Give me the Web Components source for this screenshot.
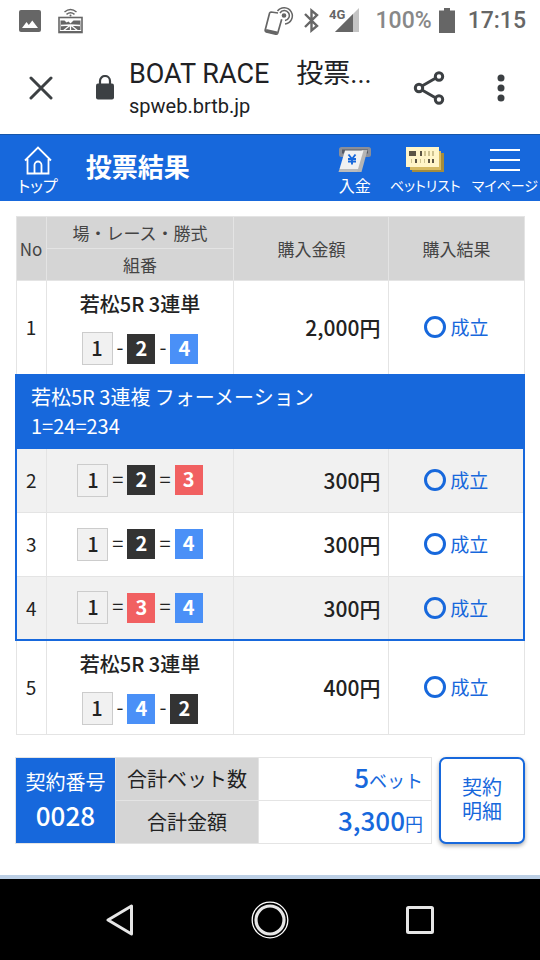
<!DOCTYPE html>
<html lang="ja">
<head>
<meta charset="utf-8">
<meta name="viewport" content="width=device-width, initial-scale=1">
<title>BOAT RACE 投票結果</title>
<style>
  :root { --blue: #1768dc; --grey: #d5d5d5; --line: #e4e4e4; --ink: #222; --stripe: #f1f1f1; }
  body { margin: 0; background: #fff; color: var(--ink); font-family: "Noto Sans CJK JP", sans-serif; }
</style>
</head>
<body>
<vote-app></vote-app>
<script>
const define = (name, html, setup) => {
  const template = document.createElement('template');
  template.innerHTML = html;
  customElements.define(name, class extends HTMLElement {
    constructor() {
      super();
      this.attachShadow({ mode: 'open' }).append(template.content.cloneNode(true));
    }
    connectedCallback() { if (setup) setup(this, this.shadowRoot); }
  });
};

define('status-bar', `
<style>
  :host { display: flex; align-items: center; height: 41px; padding: 0 14px 0 19px; box-sizing: border-box;
    font: 500 23px/26px Roboto, sans-serif; color: #666; }
  svg { display: block; flex: none; }
  .left, .right { display: flex; align-items: center; }
  .left { gap: 17px; }
  .right { margin-left: auto; }
  .cast { margin-right: 9px; }
  .bt { margin-right: 9px; }
  .signal { margin-right: 15px; }
  .percent { color: #888; margin-right: 7px; }
  .battery { margin-right: 13px; }
</style>
<div class="left">
  <svg width="22" height="22" viewBox="0 0 22 22"><rect width="22" height="22" rx="2" fill="#666"/><path d="M3 18l4.500-6 2.300 3 3.500-4.500L19 18z" fill="#fff"/></svg>
  <svg width="25" height="26" viewBox="0 0 25 26" fill="none" stroke="#666">
    <path d="M6.500 4q6-5 12 0M8.500 6.300q4-3 8 0" stroke-width="1.500"/><circle cx="12.500" cy="7.500" r="1" fill="#666" stroke="none"/>
    <rect x="1" y="9.500" width="23" height="15" stroke-width="1.600"/>
    <path d="M2.500 12.500h4l2 2 2-1 2 2 3-3h7V22H2.500z" fill="#666" stroke="none"/>
    <path d="M12.500 17L3 17.500M12.500 17l9.500.5M12.500 17L5 23M12.500 17l7.500 6M12.500 18v5" stroke="#fff" stroke-width="1.300"/>
    <path d="M1 24h23" stroke-width="2"/>
  </svg>
</div>
<div class="right">
  <svg class="cast" width="30" height="30" viewBox="0 0 30 30" fill="none" stroke="#666" stroke-width="1.700">
    <path d="M14 7L7 6Q6 6 5.600 7L1.200 24q-.3 1.500 1 2l9.500 2.200q1.500.3 2-1l4-14"/><path d="M2 24.500l11 2.500" stroke-width="3"/>
    <circle cx="20" cy="9.500" r="1.500" fill="#666"/><path d="M16 7a5 5 0 1 1 5 7.500M13.500 5a8.200 8.200 0 1 1 7.500 13" stroke-width="1.500"/>
  </svg>
  <svg class="bt" width="17" height="25" viewBox="0 0 17 25" fill="none" stroke="#666" stroke-width="2.400"><path d="M2 6l12 12-5.500 4.500v-20L14 7 2 19"/></svg>
  <svg class="signal" width="31" height="25" viewBox="0 0 31 25"><path d="M30 0v24H6z" fill="#c4c4c4"/><path d="M24 6v18H6z" fill="#666"/><text x="0" y="11" font-family="Roboto" font-weight="700" font-size="13" fill="#666" stroke="#fff" stroke-width="2" paint-order="stroke">4G</text></svg>
  <span class="percent">100%</span>
  <svg class="battery" width="16" height="25" viewBox="0 0 16 25"><path d="M5 0h6v2.500h5V25H0V2.500h5z" fill="#666"/></svg>
  <span>17:15</span>
</div>`);

define('browser-bar', `
<style>
  :host { display: flex; align-items: center; height: 94px; padding: 0 20px 0 22px; box-sizing: border-box; color: #202124;
    font-family: Roboto, "Noto Sans CJK JP", sans-serif; border-bottom: 1px solid #1656aa; }
  button { border: 0; padding: 0; background: none; display: grid; place-items: center; height: 48px; width: 38px; flex: none; }
  svg { display: block; }
  .lock { margin: 0 14px 0 35px; flex: none; }
  .page { flex: 1; min-width: 0; }
  p { margin: 0; white-space: nowrap; }
  .title { font-size: 27px; line-height: 37px; }
  .host { font-size: 20px; line-height: 26px; }
  .share { margin-right: 34px; }
</style>
<button aria-label="閉じる"><svg width="24" height="24" viewBox="0 0 24 24"><path d="M2 2l20 20M22 2L2 22" stroke="#3c4043" stroke-width="3" stroke-linecap="round"/></svg></button>
<svg class="lock" width="20" height="25" viewBox="0 0 20 25"><path d="M5 9V6a5 5 0 0 1 10 0v3" fill="none" stroke="#3c4043" stroke-width="2.200"/><rect x="1" y="8.500" width="18" height="16" rx="2" fill="#3c4043"/></svg>
<div class="page"><p class="title">BOAT RACE　投票...</p><p class="host">spweb.brtb.jp</p></div>
<button class="share" aria-label="共有"><svg width="32" height="34" viewBox="0 0 32 34" fill="none" stroke="#3c4043" stroke-width="3"><path d="M9 15L22 7.500M9 19l13 7.500"/><circle cx="6" cy="17" r="3.700"/><circle cx="26" cy="5.500" r="3.700"/><circle cx="26" cy="28.500" r="3.700"/></svg></button>
<button aria-label="メニュー"><svg width="8" height="28" viewBox="0 0 8 28" fill="#3c4043"><circle cx="4" cy="4" r="3.500"/><circle cx="4" cy="14" r="3.500"/><circle cx="4" cy="24" r="3.500"/></svg></button>`);

define('nav-link', `
<style>
  :host { display: block; font-size: 16px; }
  :host([compact]) { font-size: 14px; }
  a { display: flex; flex-direction: column; align-items: center; padding-top: 2px; color: #fff; text-decoration: none; white-space: nowrap;
    line-height: 18px; font-feature-settings: "palt"; }
  .icon { height: 32px; display: flex; align-items: center; }
</style>
<a href="#"><span class="icon"><slot name="icon"></slot></span><span><slot></slot></span></a>`);

define('app-header', `
<style>
  :host { display: flex; align-items: center; height: 66px; background: var(--blue); color: #fff; padding: 0 2px 0 18px; box-sizing: border-box; }
  h1 { margin: 0 0 0 28px; padding-bottom: 4px; font-size: 26px; line-height: 38px; font-weight: 700; }
  nav { margin-left: auto; display: flex; gap: 11px; }
  svg { display: block; }
  .deposit { margin-right: 7px; }
</style>
<nav-link><svg slot="icon" width="28" height="29" viewBox="0 0 28 29" fill="none" stroke="#fff" stroke-width="1.800"><path d="M1 14.500L14 1.500l13 13M3.500 13v14.500h21V13M10.500 27v-8a3.500 3.500 0 0 1 7 0v8"/></svg>トップ</nav-link>
<h1>投票結果</h1>
<nav>
  <nav-link class="deposit"><svg slot="icon" width="34" height="28" viewBox="0 0 34 28">
    <rect x="1" y="1" width="32" height="10" rx="2.500" fill="#8c8f98"/><path d="M4 3.500h26v4H4z" fill="#555a65"/><path d="M24 4h5.500l-6 22H12z" fill="#b5b5b5"/><path d="M7 4.500h18.500L20 23H1.500z" fill="#f1f1f1"/><path d="M1.500 23H20l-1 3H0.500z" fill="#bbb"/>
    <path d="M10.500 8.500l3.500 4.500 3.500-4.500M10 13h8M10 15.500h8M14 12.500v6" stroke="#1768dc" stroke-width="1.900" fill="none"/></svg>入金</nav-link>
  <nav-link compact><svg slot="icon" width="38" height="26" viewBox="0 0 38 26">
    <path d="M6 6h32v19H6z" fill="#a58c3c"/><path d="M4 4h31v19H4z" fill="#d6ba62"/><path d="M0 0h33v20H0z" fill="#fff5c9"/>
    <path d="M3 4h7v5H3zM14 4h2v5h-2zM9 12h2v4H9zM22 12h2v4h-2zM26 12h2v4h-2z" fill="#5c5545"/><path d="M18 4h2v5h-2zM22 4h2v5h-2zM26 4h2v5h-2zM5 12h1v4H5zM14 12h1v4h-1zM18 12h1v4h-1z" fill="#cfc391"/></svg>ベットリスト</nav-link>
  <nav-link compact><svg slot="icon" width="30" height="22" viewBox="0 0 30 22"><path d="M0 1h30M0 11h30M0 21h30" stroke="#fff" stroke-width="2"/></svg>マイページ</nav-link>
</nav>`);

define('boat-number', `
<style>
  :host { display: inline-block; box-sizing: border-box; width: 28px; height: 30px; line-height: 28px; text-align: center; font-size: 20px; font-weight: 700; color: #fff; }
  :host([boat="1"]) { width: 31px; height: 33px; line-height: 29px; background: #f1f1f1; border: 1px solid #ccc; color: var(--ink); font-weight: 500; }
  :host([boat="2"]) { background: #333; }
  :host([boat="3"]) { background: #f16061; }
  :host([boat="4"]) { background: #4a90f7; }
</style><span></span>`, (el, root) => { root.querySelector('span').textContent = el.getAttribute('boat'); });

define('boat-combo', `
<style>
  :host { display: flex; justify-content: center; align-items: center; gap: 4px; font-size: 20px; line-height: 30px; }
  .mark { padding-bottom: 3px; }
</style>`, (el, root) => {
  for (const part of el.getAttribute('pick')) {
    const boat = /\d/.test(part);
    const node = document.createElement(boat ? 'boat-number' : 'span');
    if (boat) node.setAttribute('boat', part);
    else { node.className = 'mark'; node.textContent = part; }
    root.append(node);
  }
});

define('bet-result', `
<style>
  :host { display: flex; align-items: center; justify-content: center; gap: 4px; color: var(--blue); font-size: 19px; line-height: 28px; }
  i { box-sizing: border-box; width: 22px; height: 22px; border: 3px solid var(--blue); border-radius: 50%; }
</style><i></i><span><slot></slot></span>`);

define('result-table', `
<style>
  :host { display: block; }
  table { width: 100%; border-collapse: collapse; table-layout: fixed; }
  th, td { border: 1px solid var(--line); padding: 0; box-sizing: border-box; }
  thead th { background: var(--grey); font-size: 17px; line-height: 24px; font-weight: 400; color: #444; height: 32px; }
  .no { width: 30px; } .race { width: 37%; } .sum { width: 30.500%; }
  tbody td { height: 64px; font-size: 19px; line-height: 28px; text-align: center; }
  tbody.single td { height: 94px; }
  tbody td.yen { font-size: 21px; font-weight: 500; text-align: right; padding-right: 8px; }
  .name { margin: 0 0 13px; font-size: 20px; line-height: 30px; font-weight: 500; }
  .group { border: 2px solid var(--blue); }
  .group th { background: var(--blue); border-color: var(--blue); color: #fff; text-align: left; font-size: 20px; line-height: 29px; font-weight: 400; padding: 6px 14px 8px; }
  .group tr:nth-child(even) { background: var(--stripe); }
</style>
<table>
  <colgroup><col class="no"><col class="race"><col class="sum"><col></colgroup>
  <thead>
    <tr><th rowspan="2">No</th><th>場・レース・勝式</th><th rowspan="2">購入金額</th><th rowspan="2">購入結果</th></tr>
    <tr><th>組番</th></tr>
  </thead>
  <tbody class="single"><tr><td>1</td><td><p class="name">若松5R 3連単</p><boat-combo pick="1-2-4"></boat-combo></td><td class="yen">2,000円</td><td><bet-result>成立</bet-result></td></tr></tbody>
  <tbody class="group">
    <tr><th colspan="4">若松5R 3連複 フォーメーション<br>1=24=234</th></tr>
    <tr><td>2</td><td><boat-combo pick="1=2=3"></boat-combo></td><td class="yen">300円</td><td><bet-result>成立</bet-result></td></tr>
    <tr><td>3</td><td><boat-combo pick="1=2=4"></boat-combo></td><td class="yen">300円</td><td><bet-result>成立</bet-result></td></tr>
    <tr><td>4</td><td><boat-combo pick="1=3=4"></boat-combo></td><td class="yen">300円</td><td><bet-result>成立</bet-result></td></tr>
  </tbody>
  <tbody class="single"><tr><td>5</td><td><p class="name">若松5R 3連単</p><boat-combo pick="1-4-2"></boat-combo></td><td class="yen">400円</td><td><bet-result>成立</bet-result></td></tr></tbody>
</table>`);

define('contract-summary', `
<style>
  :host { display: flex; gap: 7px; }
  table { flex: 1; border-collapse: collapse; table-layout: fixed; }
  th, td { border: 1px solid var(--line); padding: 0; height: 43px; box-sizing: border-box; font-size: 20px; line-height: 30px; font-weight: 400; }
  .id { background: var(--blue); color: #fff; width: 24%; }
  .id strong { display: block; font-size: 26px; line-height: 36px; font-weight: 500; }
  .label { background: var(--grey); width: 34.500%; }
  td { color: var(--blue); text-align: right; padding-right: 8px; font-size: 18px; }
  td strong { font-size: 26px; font-weight: 500; }
  button { width: 86px; padding: 0; border: 2px solid var(--blue); border-radius: 7px; background: #fff; color: var(--blue); box-shadow: 0 2px 4px #0005;
    font: 400 20px/24px "Liberation Sans", "Noto Sans CJK JP", sans-serif; }
</style>
<table>
  <tr><th class="id" rowspan="2">契約番号<strong>0028</strong></th><th class="label">合計ベット数</th><td><strong>5</strong>ベット</td></tr>
  <tr><th class="label">合計金額</th><td><strong>3,300</strong>円</td></tr>
</table>
<button>契約<br>明細</button>`);

define('system-nav', `
<style>
  :host { display: flex; justify-content: center; align-items: center; gap: 102px; height: 85px; box-sizing: border-box; border-top: 4px solid #bccfe5; background: #000; }
  button { width: 48px; height: 48px; padding: 0; border: 0; background: none; display: grid; place-items: center; }
  svg { display: block; }
</style>
<button aria-label="戻る"><svg width="28" height="32" viewBox="0 0 28 32"><path d="M25.500 2v28L2 16z" fill="none" stroke="#e6e6e6" stroke-width="3" stroke-linejoin="round"/></svg></button>
<button aria-label="ホーム"><svg width="38" height="38" viewBox="0 0 38 38" fill="none" stroke="#e6e6e6"><circle cx="19" cy="19" r="17.800" stroke="#fff" stroke-width="1.300"/><circle cx="19" cy="19" r="14" stroke-width="3.200"/></svg></button>
<button aria-label="履歴"><svg width="28" height="28" viewBox="0 0 28 28"><rect x="1.500" y="1.500" width="25" height="25" rx="1" fill="none" stroke="#e6e6e6" stroke-width="3"/></svg></button>`);

define('vote-app', `
<style>
  :host { display: flex; flex-direction: column; min-height: 100vh; }
  main { flex: 1; display: flex; flex-direction: column; gap: 22px; padding: 15px 15px 16px; }
</style>
<status-bar></status-bar>
<browser-bar></browser-bar>
<app-header></app-header>
<main><result-table></result-table><contract-summary></contract-summary></main>
<system-nav></system-nav>`);
</script>
</body>
</html>
